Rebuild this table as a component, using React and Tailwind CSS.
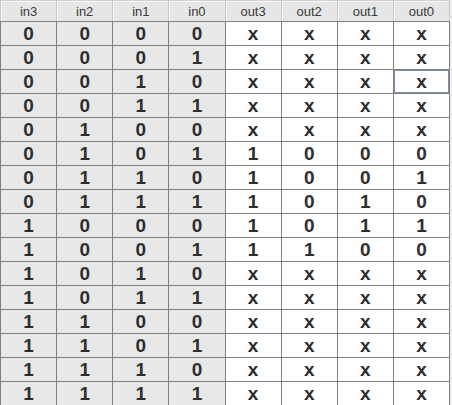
import React from 'react';

const headers = ['in3', 'in2', 'in1', 'in0', 'out3', 'out2', 'out1', 'out0'];

// outputs for each input row, x = don't care
const outputs = {
  5: ['1', '0', '0', '0'],
  6: ['1', '0', '0', '1'],
  7: ['1', '0', '1', '0'],
  8: ['1', '0', '1', '1'],
  9: ['1', '1', '0', '0'],
};

const rows = Array.from({ length: 16 }, (_, i) => {
  const ins = [3, 2, 1, 0].map((b) => String((i >> b) & 1));
  const outs = outputs[i] || ['x', 'x', 'x', 'x'];
  return [...ins, ...outs];
});

const App = () => {
  return (
    <div className="w-[452px] h-[405px] overflow-hidden bg-[#eeeeee]" style={{ fontFamily: '"Liberation Sans", Arial, sans-serif' }}>
      <table className="w-[450px] table-fixed border-collapse">
        <thead>
          <tr className="h-[21px]">
            {headers.map((h) => (
              <th
                key={h}
                className="p-0 text-[13px] font-normal text-[#3a3a3a] bg-[#e6e6e6] border-x border-x-[#c9c9c9] border-t border-t-[#d0d0d0] border-b border-b-[#808080] shadow-[inset_1px_1px_0_#f8f8f8] leading-[19px]"
              >
                {h}
              </th>
            ))}
          </tr>
        </thead>
        <tbody>
          {rows.map((row, r) => (
            <tr key={r} className="h-[24px]">
              {row.map((v, c) => {
                const selected = r === 2 && c === 7;
                return (
                  <td
                    key={c}
                    className={`p-0 text-center text-[19px] font-bold leading-[22px] text-[#2e2e2e] border border-[#808080] ${
                      c < 4 ? 'bg-[#e8e8e8]' : 'bg-white'
                    } ${selected ? 'shadow-[inset_0_0_0_1px_#7f8dae]' : ''}`}
                  >
                    {v}
                  </td>
                );
              })}
            </tr>
          ))}
        </tbody>
      </table>
    </div>
  );
};

export default App;
